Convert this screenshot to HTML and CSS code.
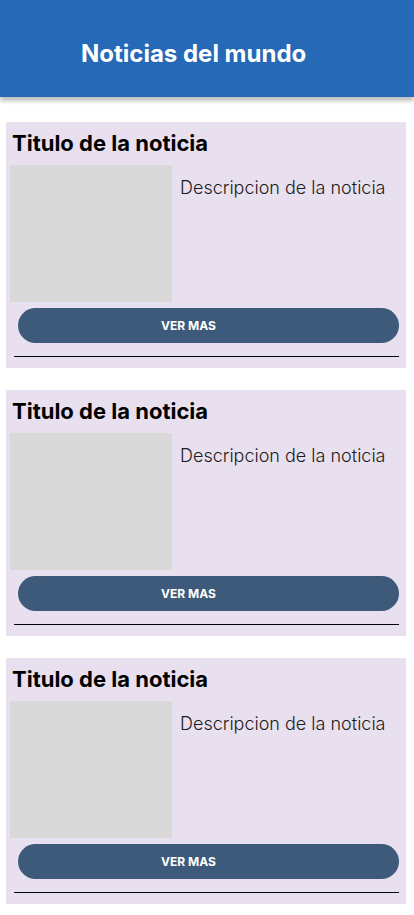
FILE: index.html
```html
<!DOCTYPE html>
<html lang="es">
<head>
  <meta charset="UTF-8" />
  <title>Noticias del mundo</title>
  <meta name="viewport" content="width=device-width, initial-scale=1.0" />
  <link rel="stylesheet" href="styles.css">
</head>
<body>
  <header class="topbar">
    <h1>Noticias del mundo</h1>
  </header>

  <main class="feed">
    <article class="news">
      <h2 class="news__title">Titulo de la noticia</h2>
      <div class="news__body">
        <div class="news__img"></div>
        <p class="news__desc">Descripcion de la noticia</p>
      </div>
      <button class="news__btn">VER MAS</button>
      <hr class="news__line" />
    </article>

    <article class="news">
      <h2 class="news__title">Titulo de la noticia</h2>
      <div class="news__body">
        <div class="news__img"></div>
        <p class="news__desc">Descripcion de la noticia</p>
      </div>
      <button class="news__btn">VER MAS</button>
      <hr class="news__line" />
    </article>

    <article class="news">
      <h2 class="news__title">Titulo de la noticia</h2>
      <div class="news__body">
        <div class="news__img"></div>
        <p class="news__desc">Descripcion de la noticia</p>
      </div>
      <button class="news__btn">VER MAS</button>
      <hr class="news__line" />
    </article>
  </main>
</body>
</html>
```

FILE: styles.css
```css
body {
  font-family: Inter, 'Noto Sans', sans-serif;
  background: #fff;
  color: #000;
  margin: 0;
  padding: 0;
}
.topbar {
  height: 97px;
  box-sizing: border-box;
  padding: 39px 0 0 81px;
  background: #2669b6;
  box-shadow: 0 4px 4px rgba(0,0,0,0.25);
}
.topbar h1 {
  margin: 0;
  font-size: 24px;
  font-weight: 700;
  color: #fff;
}
.feed {
  padding-top: 25px;
}
.news {
  width: 400px;
  margin: 0 0 22px 6px;
  padding: 8px 0 11px;
  box-sizing: border-box;
  background: #e8e0ef;
}
.news__title {
  margin: 0 0 0 6px;
  font-size: 22px;
  font-weight: 700;
}
.news__body {
  display: flex;
  gap: 8px;
  margin: 9px 0 0 4px;
}
.news__img {
  width: 162px;
  height: 137px;
  background: #d9d9d9;
}
.news__desc {
  margin: 12px 0 0;
  font-size: 18px;
  font-weight: 300;
  color: #1d1b20;
}
.news__btn {
  display: block;
  width: 381px;
  height: 35px;
  margin: 6px 0 0 12px;
  padding: 0 40px 0 0;
  border: none;
  border-radius: 18px;
  background: #3e5a7a;
  color: #fff;
  font-family: Inter, 'Noto Sans', sans-serif;
  font-size: 12px;
  font-weight: 700;
}
.news__line {
  width: 385px;
  margin: 13px 0 0 8px;
  border: none;
  border-top: 1px solid #000;
}
```
